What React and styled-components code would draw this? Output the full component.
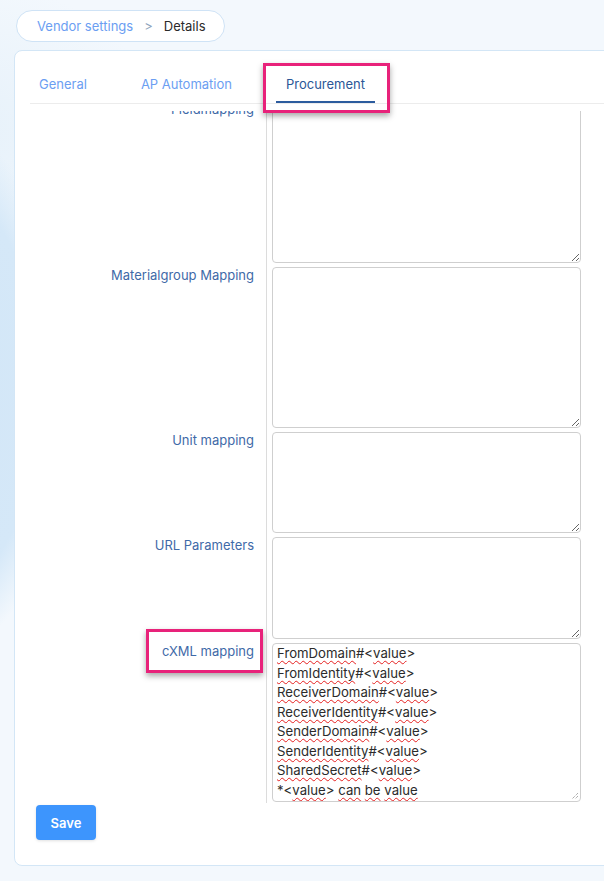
import React, { useEffect, useRef } from 'react';
import styled, { createGlobalStyle } from 'styled-components';

const GlobalStyle = createGlobalStyle`
  html, body {
    margin: 0;
    height: 100%;
    overflow: hidden;
  }
  body {
    font-family: Inter, "Noto Sans", sans-serif;
    background-color: #f3f8fd;
    background-image:
      radial-gradient(ellipse 120px 260px at -50px 390px, #d2e6f7 0%, #d5e8f8 75%, rgba(213, 232, 248, 0) 100%),
      radial-gradient(ellipse 200px 150px at -40px 130px, #e6f1fa 0%, rgba(230, 241, 250, 0) 100%);
  }
`;

const Page = styled.div`
  padding: 10px 0 0 14px;
`;

const Breadcrumb = styled.nav`
  display: inline-flex;
  align-items: center;
  gap: 11px;
  height: 30px;
  margin-left: 2px;
  padding: 0 18px 0 20px;
  background: #fff;
  border: 1px solid #cfe3f6;
  border-radius: 16px;
  font-size: 13px;
`;

const Crumb = styled.span`
  color: ${p => (p.$current ? '#2a2a2a' : '#6b9ef2')};
`;

const Separator = styled.span`
  color: #8da2bc;
`;

const Card = styled.section`
  width: 640px;
  margin-top: 8px;
  padding: 15px 0 25px 15px;
  background: #fff;
  border: 1px solid #d3e6f6;
  border-radius: 8px;
  box-sizing: border-box;
`;

const TabBar = styled.div`
  display: flex;
  gap: 34px;
  border-bottom: 1px solid #ececec;
`;

const Tab = styled.div`
  position: relative;
  padding: 10px 10px 9px;
  font-size: 13px;
  line-height: 16px;
  color: ${p => (p.$active ? '#2b5797' : '#6b9ef2')};
  border-bottom: 2px solid ${p => (p.$active ? '#2c5c9e' : 'transparent')};

  &:first-child {
    margin-left: -1px;
  }
`;

const Highlight = styled.span`
  position: absolute;
  top: ${p => p.$t}px;
  right: ${p => p.$r}px;
  bottom: ${p => p.$b}px;
  left: ${p => p.$l}px;
  border: 3px solid #e8227a;
  box-shadow: 0 3px 6px rgba(0, 0, 0, 0.35);
  pointer-events: none;
  z-index: 3;
`;

const ScrollArea = styled.div`
  height: 692px;
  margin-top: 7px;
  overflow: hidden;
`;

const FormRow = styled.div`
  display: grid;
  grid-template-columns: 236px 1fr;
`;

const FieldLabel = styled.div`
  padding-right: 12px;
  text-align: right;
  font-size: 13px;
  line-height: 16px;
  color: #3f6aa8;
`;

const LabelText = styled.span`
  position: relative;
`;

const FieldCell = styled.div`
  padding: 0 0 4px 5px;
  border-left: 1px solid #dcdcdc;
`;

const TextArea = styled.textarea`
  display: block;
  width: 309px;
  height: ${p => p.$h}px;
  margin: 0;
  padding: 0 4px;
  box-sizing: border-box;
  border: 1px solid #cfcfcf;
  border-radius: 4px;
  font-family: Inter, "Noto Sans", sans-serif;
  font-size: 13px;
  outline: none;
  resize: vertical;
`;

const TextBox = styled.div`
  position: relative;
  width: 309px;
  height: ${p => p.$h}px;
  padding: 0 4px;
  box-sizing: border-box;
  border: 1px solid #cfcfcf;
  border-radius: 4px;
  overflow: hidden;
  font-size: 13.2px;
  line-height: 19.5px;
  color: #2b2b2b;
  white-space: pre;
`;

const Grip = styled.svg`
  position: absolute;
  right: 1px;
  bottom: 1px;
`;

const Misspelled = styled.span`
  text-decoration: underline wavy #e52020;
  text-decoration-thickness: 1px;
  text-underline-offset: 1.5px;
  text-decoration-skip-ink: none;
`;

const SaveButton = styled.button`
  display: block;
  width: 60px;
  height: 35px;
  margin: 2px 0 0 6px;
  border: none;
  border-radius: 4px;
  background: #3d95fd;
  box-shadow: 0 1px 3px rgba(0, 0, 0, 0.12);
  color: #fff;
  font-family: Inter, "Noto Sans", sans-serif;
  font-size: 13px;
  font-weight: 600;
`;

const fields = [
  { label: 'Fieldmapping', h: 162 },
  { label: 'Materialgroup Mapping', h: 161 },
  { label: 'Unit mapping', h: 101 },
  { label: 'URL Parameters', h: 102 },
];

const cxmlLines = [
  [['FromDomain', true], ['#<', false], ['value', true], ['>', false]],
  [['FromIdentity', true], ['#<', false], ['value', true], ['>', false]],
  [['ReceiverDomain', true], ['#<', false], ['value', true], ['>', false]],
  [['ReceiverIdentity', true], ['#<', false], ['value', true], ['>', false]],
  [['SenderDomain', true], ['#<', false], ['value', true], ['>', false]],
  [['SenderIdentity', true], ['#<', false], ['value', true], ['>', false]],
  [['SharedSecret', true], ['#<', false], ['value', true], ['>', false]],
  [['*<', false], ['value', true], ['> ', false], ['can', true], [' ', false], ['be', true], [' ', false], ['value', true]],
];

const ResizeGrip = () => (
  <Grip width="10" height="10" viewBox="0 0 10 10">
    <path d="M9 3 L3 9 M9 6 L6 9" stroke="#8a8a8a" strokeWidth="1" strokeDasharray="1 1" />
  </Grip>
);

const App = () => {
  const scrollRef = useRef(null);

  useEffect(() => {
    if (scrollRef.current) scrollRef.current.scrollTop = 10;
  }, []);

  return (
    <>
      <GlobalStyle />
      <Page>
        <Breadcrumb>
          <Crumb>Vendor settings</Crumb>
          <Separator>&gt;</Separator>
          <Crumb $current>Details</Crumb>
        </Breadcrumb>

        <Card>
          <TabBar>
            <Tab>General</Tab>
            <Tab>AP Automation</Tab>
            <Tab $active>
              Procurement
              <Highlight $t={-3} $r={-15} $b={-12} $l={-13} />
            </Tab>
          </TabBar>

          <ScrollArea ref={scrollRef}>
            {fields.map(f => (
              <FormRow key={f.label}>
                <FieldLabel>{f.label}</FieldLabel>
                <FieldCell>
                  <TextArea $h={f.h} spellCheck={false} defaultValue="" />
                </FieldCell>
              </FormRow>
            ))}
            <FormRow>
              <FieldLabel>
                <LabelText>
                  cXML mapping
                  <Highlight $t={-14} $r={-9} $b={-14} $l={-16} />
                </LabelText>
              </FieldLabel>
              <FieldCell>
                <TextBox $h={159} role="textbox" aria-multiline="true">
                  {cxmlLines.map((line, i) => (
                    <div key={i}>
                      {line.map(([text, wrong], j) =>
                        wrong ? <Misspelled key={j}>{text}</Misspelled> : <span key={j}>{text}</span>
                      )}
                    </div>
                  ))}
                  <ResizeGrip />
                </TextBox>
              </FieldCell>
            </FormRow>
          </ScrollArea>

          <SaveButton type="button">Save</SaveButton>
        </Card>
      </Page>
    </>
  );
};

export default App;
